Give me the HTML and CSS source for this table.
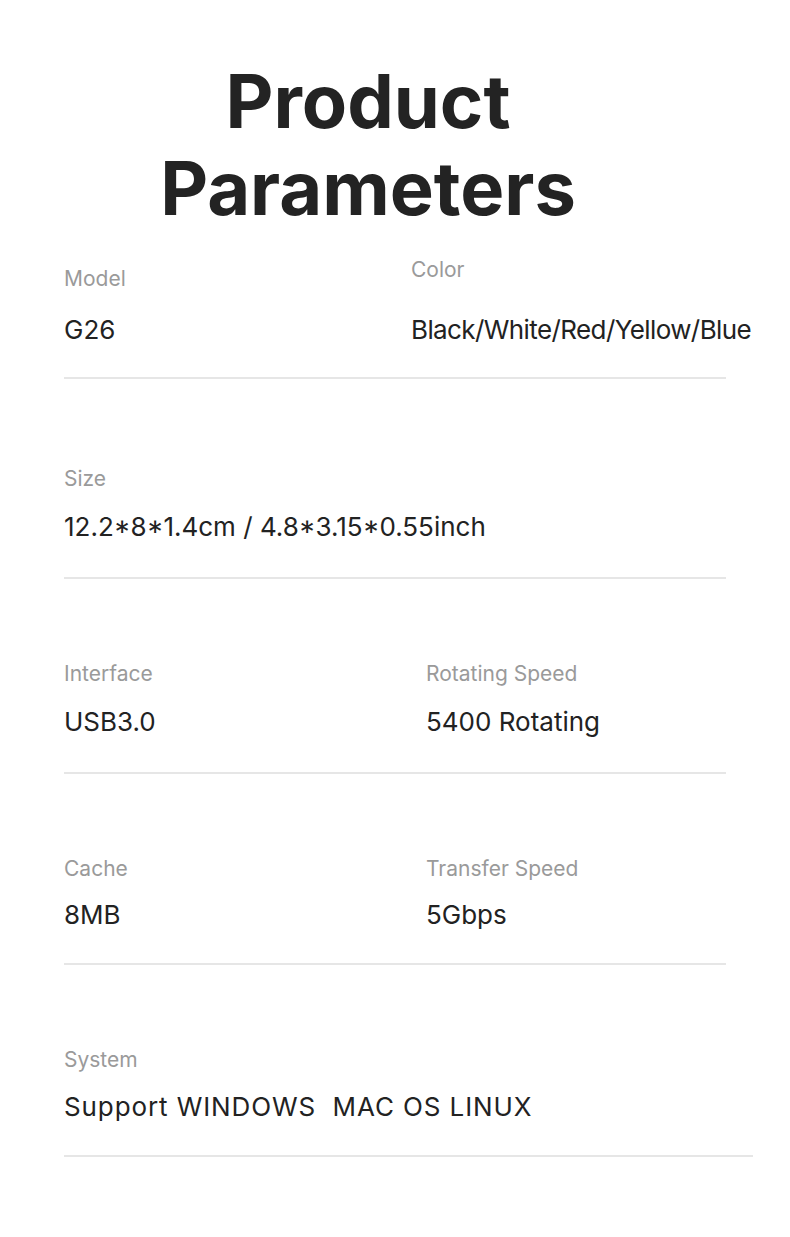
FILE: index.html
```html
<!DOCTYPE html>
<html lang="en">
<head>
<meta charset="utf-8">
<title>Product Parameters</title>
<link rel="stylesheet" href="styles.css">
</head>
<body>
<main class="page">
  <h1 class="title">Product<br>Parameters</h1>
  <section class="specs">
    <div class="row row-first cols-a">
      <div class="cell">
        <div class="label">Model</div>
        <div class="value">G26</div>
      </div>
      <div class="cell">
        <div class="label label-raised">Color</div>
        <div class="value value-tight">Black/White/Red/Yellow/Blue</div>
      </div>
    </div>
    <div class="row row-second">
      <div class="cell">
        <div class="label">Size</div>
        <div class="value">12.2*8*1.4cm / 4.8*3.15*0.55inch</div>
      </div>
    </div>
    <div class="row cols-b">
      <div class="cell">
        <div class="label">Interface</div>
        <div class="value">USB3.0</div>
      </div>
      <div class="cell">
        <div class="label">Rotating Speed</div>
        <div class="value">5400 Rotating</div>
      </div>
    </div>
    <div class="row row-tight cols-b">
      <div class="cell">
        <div class="label">Cache</div>
        <div class="value">8MB</div>
      </div>
      <div class="cell">
        <div class="label">Transfer Speed</div>
        <div class="value">5Gbps</div>
      </div>
    </div>
    <div class="row row-last">
      <div class="cell">
        <div class="label">System</div>
        <div class="value value-wide">Support WINDOWS&nbsp; MAC OS LINUX</div>
      </div>
    </div>
  </section>
</main>
</body>
</html>
```
FILE: styles.css
```css
* { box-sizing: border-box; }
html, body { margin: 0; padding: 0; background: #ffffff; }
body { font-family: Inter, "Noto Sans", sans-serif; color: #222222; }

.page { width: 790px; padding: 58px 0 0 64px; }

.title {
  margin: 0;
  width: 608px;
  text-align: center;
  font-family: Inter, "Noto Sans", sans-serif;
  font-weight: 700;
  font-size: 74px;
  line-height: 87px;
  color: #232323;
  letter-spacing: 0;
}

.specs { display: flex; flex-direction: column; }

.row {
  --gap: 16px;
  width: 662px;
  padding: 81px 0 32px;
  border-bottom: 2px solid #e6e6e6;
  display: grid;
  grid-template-columns: 1fr;
}
.row-first { padding: 33px 0 29px; --gap: 19px; }
.row-second { padding-top: 86px; }
.row-tight { padding-bottom: 30px; --gap: 14px; }
.row-last { width: 689px; padding-bottom: 30px; --gap: 15px; }
.cols-a { grid-template-columns: 347px 1fr; }
.cols-b { grid-template-columns: 362px 1fr; }

.cell { display: flex; flex-direction: column; gap: var(--gap); white-space: nowrap; }

.label {
  font-size: 21px;
  line-height: 28px;
  color: #9a9a9a;
  font-weight: 400;
}
.label-raised { margin-top: -9px; margin-bottom: 9px; }

.value {
  font-size: 26px;
  line-height: 36px;
  color: #222222;
  font-weight: 400;
}
.value-tight { letter-spacing: -0.6px; }
.value-wide { letter-spacing: 0.9px; }
```
